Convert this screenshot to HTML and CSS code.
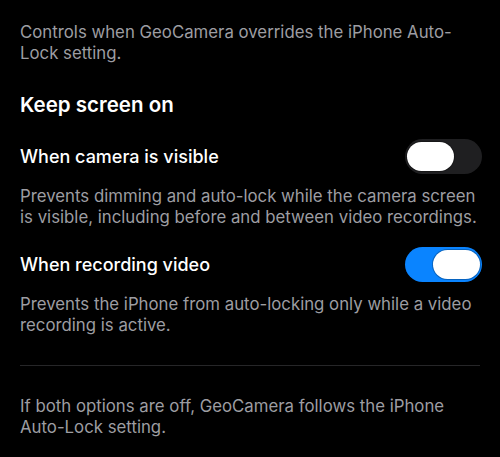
FILE: index.html
```html
<!DOCTYPE html>
<html>
<head>
<meta charset="utf-8">
<link rel="stylesheet" href="styles.css">
</head>
<body>
<main class="page">
  <p class="desc intro">Controls when GeoCamera overrides the iPhone Auto-Lock setting.</p>
  <h2 class="heading">Keep screen on</h2>
  <div class="row first">
    <span class="label">When camera is visible</span>
    <span class="toggle off"><span class="knob"></span></span>
  </div>
  <p class="desc sub">Prevents dimming and auto-lock while the camera screen is visible, including before and between video recordings.</p>
  <div class="row">
    <span class="label">When recording video</span>
    <span class="toggle on"><span class="knob"></span></span>
  </div>
  <p class="desc sub">Prevents the iPhone from auto-locking only while a video recording is active.</p>
  <hr class="divider">
  <p class="desc footer">If both options are off, GeoCamera follows the iPhone Auto-Lock setting.</p>
</main>
</body>
</html>
```

FILE: styles.css
```css
html, body {
  margin: 0;
  padding: 0;
  background: #000;
}
body {
  font-family: Inter, "Noto Sans", "Liberation Sans", sans-serif;
  color: #fff;
}
.page {
  padding: 22px 20px 0 20px;
  display: flex;
  flex-direction: column;
}
.desc {
  margin: 0;
  font-size: 16.8px;
  line-height: 21px;
  color: #9d9da2;
}
.heading {
  margin: 29px 0 0 0;
  font-size: 20.5px;
  line-height: 24px;
  font-weight: 600;
  color: #fff;
}
.row {
  display: flex;
  align-items: center;
  justify-content: space-between;
  margin-top: 19px;
}
.row.first {
  margin-top: 22px;
}
.label {
  font-size: 18px;
  line-height: 24px;
  font-weight: 500;
  color: #fff;
}
.sub {
  margin-top: 12px;
}
.toggle {
  width: 77px;
  height: 35px;
  border-radius: 18px;
  display: flex;
  align-items: center;
  padding: 0 2px;
  box-sizing: border-box;
  margin-right: -2px;
}
.toggle.off {
  background: #1f1f21;
  justify-content: flex-start;
}
.toggle.on {
  background: #0a84ff;
  justify-content: flex-end;
}
.knob {
  width: 47px;
  height: 29px;
  border-radius: 15px;
  background: #fff;
  box-shadow: 0 0 0 1px rgba(0,0,0,0.25);
}
.divider {
  margin: 29px 0 0 0;
  border: 0;
  height: 1px;
  background: #262628;
}
.footer {
  margin-top: 30px;
}
```
